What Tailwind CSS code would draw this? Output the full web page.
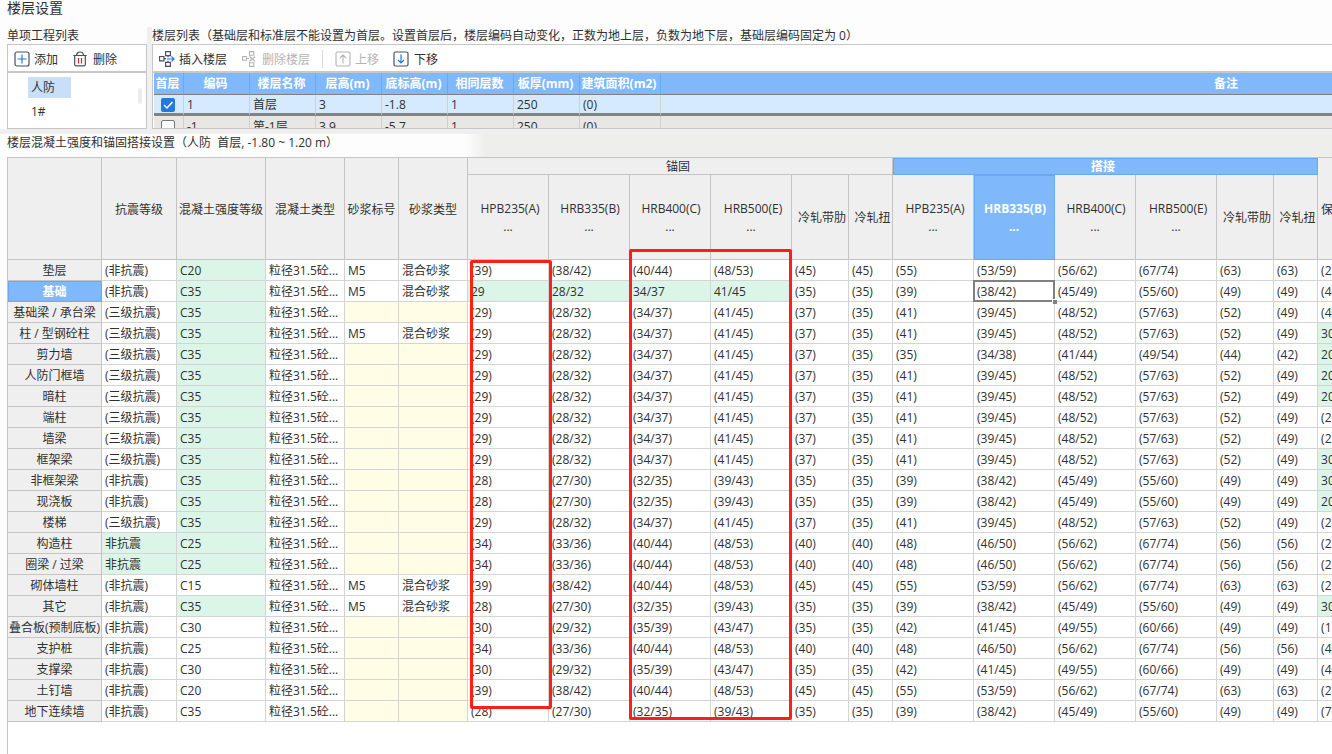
<!DOCTYPE html>
<html lang="zh-CN">
<head>
<meta charset="utf-8">
<title>楼层设置</title>
<script src="https://cdn.jsdelivr.net/npm/@tailwindcss/browser@4"></script>
</head>
<body class="flex h-screen flex-col overflow-hidden bg-[#fdfdfd] font-['Open_Sans','Noto_Sans_CJK_SC',sans-serif] text-xs text-[#303030]">
<h1 class="h-[27px] shrink-0 pl-[7px] text-sm leading-[15px]">楼层设置</h1>

<div class="flex h-[102px] shrink-0">
  <section class="flex w-[147px] shrink-0 flex-col pl-[7px]">
    <h2 class="h-[17px] leading-[17px]">单项工程列表</h2>
    <div class="flex flex-1 flex-col border border-[#c5c6c9] bg-white">
      <div class="flex h-[28px] shrink-0 items-center gap-[14px] border-b-2 border-[#c8c8c8] pt-0.5 pl-[6px]">
        <button type="button" class="flex items-center gap-1">
          <svg class="size-4" viewBox="0 0 16 16" fill="none"><rect x="1" y="1" width="14" height="14" rx="2" stroke="#4b5064" stroke-width="1.2"/><path d="M8 3.5v9M3.5 8h9" stroke="#2478dc" stroke-width="1.2"/></svg>
          <span class="pt-px leading-4">添加</span>
        </button>
        <button type="button" class="flex items-center gap-[5px]">
          <svg class="size-4" viewBox="0 0 16 16" fill="none"><path d="M1.300 4.500h13.400M4.600 4.500C4.600 2.600 6 1 8 1s3.400 1.600 3.400 3.500M2.700 4.500v9c0 .8.600 1.400 1.400 1.400h7.800c.8 0 1.400-.6 1.400-1.400v-9" stroke="#4b5064" stroke-width="1.200"/><path d="M6.500 7v5.500M9.500 7v5.500" stroke="#d9262f" stroke-width="1.200"/></svg>
          <span class="pt-px leading-4">删除</span>
        </button>
      </div>
      <div class="flex flex-1 justify-between">
        <ul class="flex flex-col gap-1 pt-1 pl-5">
          <li class="h-[21px] w-[43px] bg-[#c9dff8] pl-[3px] leading-[21px]">人防</li>
          <li class="h-[20px] pl-[3px] leading-[20px]">1#</li>
        </ul>
        <div class="mt-[15px] mr-1 h-4 w-1 rounded-full bg-[#ececec]"></div>
      </div>
    </div>
  </section>
  <div class="w-[5px] shrink-0 bg-[#efefef]"></div>
  <section class="flex min-w-0 flex-1 flex-col">
    <h2 class="h-[17px] leading-[17px] whitespace-nowrap">楼层列表（基础层和标准层不能设置为首层。设置首层后，楼层编码自动变化，正数为地上层，负数为地下层，基础层编码固定为 0）</h2>
    <div class="flex min-h-0 flex-1 flex-col border-y border-l border-[#c5c6c9] bg-white">
      <div class="flex h-[28px] shrink-0 items-center border-b-2 border-[#c8c8c8] pt-0.5 pl-[6px]">
        <button type="button" class="flex items-center gap-1">
          <svg class="size-4" viewBox="0 0 16 16" fill="none" stroke-width="1.200"><path d="M.6 5.500h4.300v4.300H.6zM6.600.6h4.800v4H6.600zM6.600 11.400h4.800v4H6.600zM4.900 7.700H7M9 4.600v1.700M9 9.700v1.700" stroke="#4b5064"/><path d="M8 8h7M12.500 5.500 15 8l-2.500 2.500" stroke="#2478dc"/></svg>
          <span class="pt-px leading-4">插入楼层</span>
        </button>
        <button type="button" disabled class="ml-[15px] flex items-center gap-1 text-[#b4b4b4]">
          <svg class="size-4" viewBox="0 0 16 16" fill="none" stroke="currentColor" stroke-width="1.100"><path d="M.6 5.500h3.800v3.800H.6zM7.500.6h4.300v3.600H7.500zM7.500 11.800h4.300v3.600H7.500zM4.400 7.500H7M7.500 5.500l5.500 5M13 5.500l-5.500 5"/></svg>
          <span class="pt-px leading-4">删除楼层</span>
        </button>
        <div class="mx-3 h-[18px] w-px bg-[#dadada]"></div>
        <button type="button" disabled class="flex items-center gap-1 text-[#b4b4b4]">
          <svg class="size-4" viewBox="0 0 16 16" fill="none" stroke="currentColor" stroke-width="1.100"><rect x="1" y="1" width="14" height="14" rx="1.500"/><path d="M8 12.500V4M5 7l3-3 3 3"/></svg>
          <span class="pt-px leading-4">上移</span>
        </button>
        <button type="button" class="ml-[14px] flex items-center gap-[5px]">
          <svg class="size-4" viewBox="0 0 16 16" fill="none" stroke-width="1.200"><rect x="1" y="1" width="14" height="14" rx="1.500" stroke="#4b5064"/><path d="M8 3.500V12M5 9l3 3 3-3" stroke="#2478dc"/></svg>
          <span class="pt-px leading-4">下移</span>
        </button>
      </div>
      <div class="min-h-0 flex-1 overflow-hidden pl-px">
        <table class="w-[1640px] table-fixed border-separate border-spacing-0 text-left leading-4">
          <colgroup><col class="w-[30px]"><col class="w-[66px]"><col class="w-[66px]"><col class="w-[66px]"><col class="w-[66px]"><col class="w-[66px]"><col class="w-[66px]"><col class="w-[81px]"><col></colgroup>
          <thead>
            <tr class="h-[22px] bg-[#7fb9fb] text-center whitespace-nowrap text-white *:border-r *:border-b *:border-r-[#6aa9ee] *:border-b-[#808080] *:p-0 *:pr-0.5">
              <th>首层</th><th>编码</th><th>楼层名称</th><th>层高(m)</th><th>底标高(m)</th><th>相同层数</th><th>板厚(mm)</th><th>建筑面积(m2)</th><th>备注</th>
            </tr>
          </thead>
          <tbody>
            <tr class="h-[21px] bg-[#d5eafe] *:border-r *:border-b-3 *:border-r-[#d0d0d0] *:border-b-[#808482] *:p-0 *:pt-0.5 *:pl-[3px]">
              <td><span class="relative ml-1 block size-[14px]"><input type="checkbox" checked aria-label="首层 1" class="block size-[14px] appearance-none rounded-xs bg-[#2479df]"><svg class="pointer-events-none absolute inset-0 size-[14px]" viewBox="0 0 14 14" fill="none"><path d="m3 7 3 3 5.500-6" stroke="#fff" stroke-width="1.500"/></svg></span></td>
              <td>1</td><td>首层</td><td>3</td><td>-1.8</td><td>1</td><td>250</td><td>(0)</td><td></td>
            </tr>
            <tr class="h-[21px] bg-[#e8e7e3] *:border-r *:border-r-[#d0d0d0] *:p-0 *:pl-[3px]">
              <td><input type="checkbox" aria-label="首层 -1" class="ml-1 block size-[14px] appearance-none rounded-xs border border-[#767676] bg-white"></td>
              <td>-1</td><td>第-1层</td><td>3.9</td><td>-5.7</td><td>1</td><td>250</td><td>(0)</td><td></td>
            </tr>
          </tbody>
        </table>
      </div>
    </div>
  </section>
</div>

<div class="h-[5px] shrink-0 bg-[#efefef]"></div>
<div class="flex h-[23px] shrink-0">
  <h2 class="w-[465px] pl-[7px] leading-[18px] whitespace-pre">楼层混凝土强度和锚固搭接设置（人防  首层, -1.80 ~ 1.20 m）</h2>
  <div class="flex-1 bg-linear-to-r from-[#fdfdfd] to-[#eeeeed] to-[20px]"></div>
</div>

<main class="relative ml-[7px] min-h-0 flex-1 overflow-hidden border-t border-l border-[#c4c4c4] bg-white">
  <table class="w-[1400px] table-fixed border-separate border-spacing-0 text-left leading-[18px] whitespace-nowrap">
    <colgroup>
      <col class="w-[94px]"><col class="w-[75px]"><col class="w-[89px]"><col class="w-[79px]"><col class="w-[54px]"><col class="w-[69px]">
      <col class="w-[81px]"><col class="w-[81px]"><col class="w-[81px]"><col class="w-[81px]"><col class="w-[57px]"><col class="w-[44px]">
      <col class="w-[81px]"><col class="w-[81px]"><col class="w-[81px]"><col class="w-[81px]"><col class="w-[57px]"><col class="w-[44px]"><col>
    </colgroup>
    <thead class="bg-[#efefef] text-center">
      <tr class="h-[17px] *:border-r *:border-b *:border-[#c4c4c4] *:p-0 *:pt-0.5 *:font-normal">
        <th rowspan="2"></th><th rowspan="2">抗震等级</th><th rowspan="2">混凝土强度等级</th><th rowspan="2">混凝土类型</th><th rowspan="2">砂浆标号</th><th rowspan="2">砂浆类型</th>
        <th colspan="6" class="leading-[14px]"><span class="pr-1">锚固</span></th>
        <th colspan="6" class="bg-[#7fb9fb] leading-[14px] text-white outline outline-[#6aa9ee] -outline-offset-1"><b class="pr-1">搭接</b></th>
        <th rowspan="2" class="text-left"><span class="pl-[3px]">保护层厚度(mm)</span></th>
      </tr>
      <tr class="h-[85px] *:border-r *:border-b *:border-[#c4c4c4] *:p-0 *:pt-0.5 *:font-normal">
        <th><span class="pl-1">HPB235(A)</span><br>...</th><th><span class="pl-0.5">HRB335(B)</span><br>...</th><th><span class="pl-0.5">HRB400(C)</span><br>...</th><th><span class="pl-1">HRB500(E)</span><br>...</th><th><span class="pl-1">冷轧带肋</span></th><th><span class="pl-1">冷轧扭</span></th>
        <th><span class="pl-1">HPB235(A)</span><br>...</th><th class="bg-[#7fb9fb] text-white outline outline-[#6aa9ee] -outline-offset-1"><b><span class="pl-0.5">HRB335(B)</span><br>...</b></th><th><span class="pl-0.5">HRB400(C)</span><br>...</th><th><span class="pl-1">HRB500(E)</span><br>...</th><th><span class="pl-1">冷轧带肋</span></th><th><span class="pl-1">冷轧扭</span></th>
      </tr>
    </thead>
    <tbody id="rows"></tbody>
  </table>
  <div class="pointer-events-none absolute top-[102px] left-[462px] h-[449px] w-[82px] rounded-xs border-3 border-[#ff2015]"></div>
  <div class="pointer-events-none absolute top-[91px] left-[621px] h-[471px] w-[163px] rounded-xs border-3 border-[#ff2015]"></div>
</main>

<script>
const sets = {
  a: '(39) (38/42) (40/44) (48/53) (45) (45) (55) (53/59) (56/62) (67/74) (63) (63)',
  b: '29 28/32 34/37 41/45 (35) (35) (39) (38/42) (45/49) (55/60) (49) (49)',
  c: '(29) (28/32) (34/37) (41/45) (37) (35) (41) (39/45) (48/52) (57/63) (52) (49)',
  d: '(29) (28/32) (34/37) (41/45) (37) (35) (35) (34/38) (41/44) (49/54) (44) (42)',
  e: '(28) (27/30) (32/35) (39/43) (35) (35) (39) (38/42) (45/49) (55/60) (49) (49)',
  f: '(34) (33/36) (40/44) (48/53) (40) (40) (48) (46/50) (56/62) (67/74) (56) (56)',
  g: '(30) (29/32) (35/39) (43/47) (35) (35) (42) (41/45) (49/55) (60/66) (49) (49)'
};
// name, seismic grade, concrete grade, grade edited, mortar present, value set, cover
const data = [
  ['垫层','(非抗震)','C20',1,1,'a','(25)'],
  ['基础','(非抗震)','C35',1,1,'b','(40)'],
  ['基础梁 / 承台梁','(三级抗震)','C35',1,0,'c','(40)'],
  ['柱 / 型钢砼柱','(三级抗震)','C35',1,1,'c','30'],
  ['剪力墙','(三级抗震)','C35',1,0,'d','20'],
  ['人防门框墙','(三级抗震)','C35',1,0,'c','20'],
  ['暗柱','(三级抗震)','C35',1,0,'c','20'],
  ['端柱','(三级抗震)','C35',1,0,'c','(20)'],
  ['墙梁','(三级抗震)','C35',1,0,'c','(20)'],
  ['框架梁','(三级抗震)','C35',1,0,'c','30'],
  ['非框架梁','(非抗震)','C35',1,0,'e','30'],
  ['现浇板','(非抗震)','C35',1,0,'e','20'],
  ['楼梯','(三级抗震)','C35',1,0,'c','(20)'],
  ['构造柱','非抗震','C25',1,0,'f','(25)'],
  ['圈梁 / 过梁','非抗震','C25',1,0,'f','(25)'],
  ['砌体墙柱','(非抗震)','C15',0,1,'a','(25)'],
  ['其它','(非抗震)','C35',1,1,'e','30'],
  ['叠合板(预制底板)','(非抗震)','C30',0,0,'g','(15)'],
  ['支护桩','(非抗震)','C25',0,0,'f','(45)'],
  ['支撑梁','(非抗震)','C30',0,0,'g','(40)'],
  ['土钉墙','(非抗震)','C20',0,0,'a','(25)'],
  ['地下连续墙','(非抗震)','C35',0,0,'e','(70)']
];
const green = 'bg-[#dcf5e9]', yellow = 'bg-[#fffde5]';
const cell = (text, bg = '') =>
  `<td class="border-r border-b border-[#d4d4d4] p-0 pt-0.5 pl-[3px] ${bg}">${text}</td>`;
const marker = '<span class="pointer-events-none absolute -inset-px border-2 border-[#808080]"></span><span class="absolute -right-[3px] -bottom-[3px] size-[5px] border-t border-l border-white bg-[#808080]"></span>';
document.getElementById('rows').innerHTML = data.map(([name, seismic, grade, edited, mortar, set, cover], r) => {
  const head = r === 1
    ? `<th scope="row" class="border-r border-b border-[#6aa9ee] bg-[#7fb9fb] p-0 pt-0.5 text-center font-bold text-white outline outline-[#6aa9ee] -outline-offset-1">${name}</th>`
    : `<th scope="row" class="border-r border-b border-[#c4c4c4] bg-[#efefef] p-0 pt-0.5 text-center font-normal">${name}</th>`;
  const values = sets[set].split(' ').map((v, i) =>
    r === 1 && i === 7
      ? `<td class="relative border-r border-b border-[#d4d4d4] p-0 pt-0.5 pl-[3px]">${v}${marker}</td>`
      : cell(v, v[0] === '(' ? '' : green)).join('');
  return `<tr class="h-[21px]">${head}${cell(seismic, seismic[0] === '(' ? '' : green)}${cell(grade, edited ? green : '')}${cell('粒径31.5砼...')}${cell(mortar ? 'M5' : '', mortar ? '' : yellow)}${cell(mortar ? '混合砂浆' : '', mortar ? '' : yellow)}${values}${cell(cover, cover[0] === '(' ? '' : green)}</tr>`;
}).join('');
</script>
</body>
</html>
